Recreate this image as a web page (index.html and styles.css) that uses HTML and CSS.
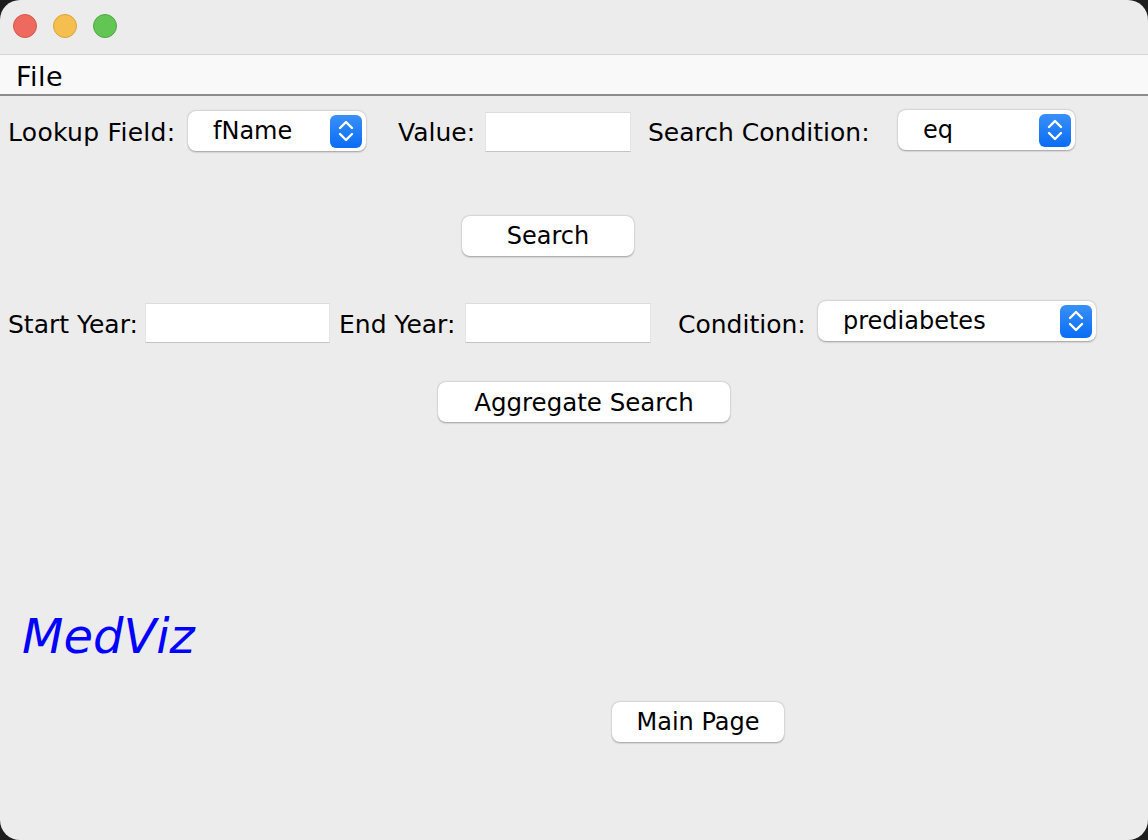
FILE: index.html
```html
<!DOCTYPE html>
<html>
<head>
<meta charset="utf-8">
<link rel="stylesheet" href="styles.css">
</head>
<body>
<div class="window">
  <div class="titlebar">
    <span class="light red"></span>
    <span class="light yellow"></span>
    <span class="light green"></span>
  </div>
  <div class="menubar"><span class="menu">File</span></div>
  <div class="content">
    <div class="row row1">
      <span class="label lbl-lookup">Lookup Field:</span>
      <div class="combo combo-lookup"><span class="combo-text">fName</span><span class="arrows"><svg viewBox="0 0 32 34" width="32" height="34"><path d="M10 14 L16 8 L22 14 M10 20 L16 26 L22 20" fill="none" stroke="#fff" stroke-width="2.4" stroke-linecap="round" stroke-linejoin="round"/></svg></span></div>
      <span class="label lbl-value">Value:</span>
      <div class="field field-value"></div>
      <span class="label lbl-cond">Search Condition:</span>
      <div class="combo combo-cond"><span class="combo-text">eq</span><span class="arrows"><svg viewBox="0 0 32 34" width="32" height="34"><path d="M10 14 L16 8 L22 14 M10 20 L16 26 L22 20" fill="none" stroke="#fff" stroke-width="2.4" stroke-linecap="round" stroke-linejoin="round"/></svg></span></div>
    </div>
    <div class="btn-row btn-row-search"><button class="btn btn-search">Search</button></div>
    <div class="row row2">
      <span class="label lbl-start">Start Year:</span>
      <div class="field field-start"></div>
      <span class="label lbl-end">End Year:</span>
      <div class="field field-end"></div>
      <span class="label lbl-condition">Condition:</span>
      <div class="combo combo-condition"><span class="combo-text">prediabetes</span><span class="arrows"><svg viewBox="0 0 32 34" width="32" height="34"><path d="M10 14 L16 8 L22 14 M10 20 L16 26 L22 20" fill="none" stroke="#fff" stroke-width="2.4" stroke-linecap="round" stroke-linejoin="round"/></svg></span></div>
    </div>
    <div class="btn-row btn-row-agg"><button class="btn btn-agg">Aggregate Search</button></div>
    <div class="brand">MedViz</div>
    <div class="btn-row btn-row-main"><button class="btn btn-main">Main Page</button></div>
  </div>
</div>
</body>
</html>
```
FILE: styles.css
```css
* { box-sizing: border-box; }
html, body { margin: 0; padding: 0; }
body {
  background: #1e1e1e;
  font-family: "DejaVu Sans", "Liberation Sans", sans-serif;
  color: #000;
}
.window {
  width: 1148px;
  height: 840px;
  background: #ececec;
  border-radius: 20px;
  overflow: hidden;
}
.titlebar {
  height: 55px;
  display: flex;
  align-items: center;
  gap: 16px;
  padding: 0 0 2px 13px;
  border-bottom: 1px solid #d6d6d6;
}
.light {
  width: 24px;
  height: 24px;
  border-radius: 50%;
  display: block;
}
.red { background: #ee6a5f; border: 1px solid #d5564c; }
.yellow { background: #f5bf4f; border: 1px solid #d8a13a; }
.green { background: #62c554; border: 1px solid #4ea83f; }
.menubar {
  height: 41px;
  background: #f9f9f9;
  border-bottom: 2px solid #8c8c8c;
  display: flex;
  align-items: center;
  padding: 3px 0 0 16px;
}
.menu { font-size: 27px; letter-spacing: 0.5px; }
.content { padding-top: 14px; }
.row {
  display: flex;
  align-items: center;
  padding-left: 8px;
  height: 42px;
}
.label {
  font-size: 25px;
  white-space: nowrap;
  flex: none;
  padding-top: 3px;
}
.combo {
  flex: none;
  height: 40px;
  background: #fff;
  border-radius: 8px;
  box-shadow: 0 0.5px 2px rgba(0,0,0,0.35);
  display: flex;
  align-items: center;
  justify-content: space-between;
  padding: 0 4px 0 25px;
  font-size: 24px;
}
.arrows {
  width: 32px;
  height: 33px;
  border-radius: 6px;
  background: linear-gradient(#3a90f8, #0a6cf5);
  display: flex;
  align-items: center;
  justify-content: center;
}
.arrows svg { display: block; }
.field {
  flex: none;
  height: 40px;
  background: #fff;
  border-top: 1px solid #dcdcdc;
  border-left: 1px solid #e4e4e4;
  border-right: 1px solid #e4e4e4;
  border-bottom: 1px solid #c4c4c4;
}
.lbl-lookup { width: 180px; letter-spacing: 0.3px; }
.combo-lookup { width: 178px; }
.lbl-value { width: 87px; margin-left: 32px; }
.field-value { width: 146px; margin-top: 2px; }
.lbl-cond { width: 250px; margin-left: 17px; }
.combo-cond { width: 177px; margin-top: -2px; }
.btn-row { display: flex; }
.btn {
  height: 40px;
  background: #fff;
  border: none;
  border-radius: 8px;
  box-shadow: 0 0.5px 2px rgba(0,0,0,0.35);
  font-family: "DejaVu Sans", "Liberation Sans", sans-serif;
  font-size: 24px;
  color: #000;
  padding: 0;
}
.btn-row-search { margin-top: 64px; padding-left: 462px; }
.btn-search { width: 172px; }
.row2 { margin-top: 46px; }
.lbl-start { width: 137px; }
.field-start { width: 185px; }
.lbl-end { width: 126px; margin-left: 9px; }
.field-end { width: 186px; }
.lbl-condition { width: 140px; margin-left: 27px; }
.combo-condition { width: 278px; margin-top: -4px; }
.btn-row-agg { margin-top: 38px; padding-left: 438px; }
.btn-agg { width: 292px; font-size: 24.5px; }
.brand {
  margin-top: 186px;
  padding-left: 22px;
  font-size: 48px;
  font-style: italic;
  color: #0000ff;
  height: 56px;
  line-height: 56px;
}
.btn-row-main { margin-top: 38px; padding-left: 612px; }
.btn-main { width: 172px; }
```
